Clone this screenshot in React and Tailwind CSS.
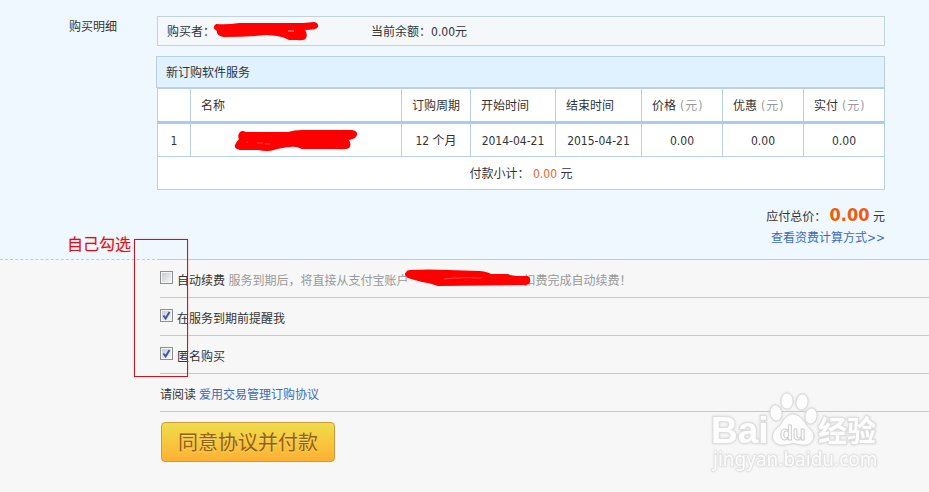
import { useState } from "react";
import clsx from "clsx";

const columns = [
  { title: "", width: "w-[33px]" },
  { title: "名称", width: "w-auto" },
  { title: "订购周期", width: "w-[69px]" },
  { title: "开始时间", width: "w-[85px]" },
  { title: "结束时间", width: "w-[86px]" },
  { title: "价格", unit: "元", width: "w-[81px]" },
  { title: "优惠", unit: "元", width: "w-[81px]" },
  { title: "实付", unit: "元", width: "w-[81px]" },
];

const BuyerMark = () => (
  <svg
    width="106"
    height="20"
    viewBox="0 0 106 20"
    className="-ml-0.5"
    aria-hidden="true"
  >
    <path
      d="M3 2 Q14 3 26 1 L90 1 L101 0 Q106 1 105 5 Q104 8 92 8 Q95 12 93 16 Q92 19 84 18 L76 18 Q71 15 64 14 L54 13 Q34 15 10 15 Q3 13 4 9 Q-2 6 3 2Z"
      fill="#fe0000"
    />
    <path d="M75 9 L81 9" stroke="#f7b0b0" strokeWidth="1" />
  </svg>
);

const NameMark = () => (
  <svg
    width="124"
    height="22"
    viewBox="0 0 124 22"
    className="mx-auto"
    aria-hidden="true"
  >
    <path
      d="M6 2 Q8 0 12 2 L54 2 Q60 0 68 0 L118 0 Q124 1 123 5 Q122 9 115 10 Q118 15 115 18 Q112 20 104 19 L68 19 Q62 16 56 17 Q46 18 40 20 Q34 22 24 20 L6 20 Q0 19 1 15 Q3 11 5 9 Q3 5 6 2Z"
      fill="#fe0000"
    />
    <path d="M12 12 h2 M23 13 h6 M31 14 h5" stroke="#f04a3a" strokeWidth="1" />
  </svg>
);

const AccountMark = () => (
  <svg
    width="127"
    height="17"
    viewBox="0 0 127 17"
    className="absolute -left-1 -top-1"
    aria-hidden="true"
  >
    <path
      d="M6 1 Q24 0 44 1 L76 2 Q84 3 87 5 L104 5 Q108 7 116 7 L124 7 Q127 9 126 13 Q125 16 121 16 L34 17 Q26 14 18 13 Q10 11 4 9 Q-1 6 2 3 Q3 1 6 1Z"
      fill="#fe0000"
    />
    <path
      d="M40 10 Q56 8 78 9"
      stroke="#f44444"
      strokeWidth="1"
      fill="none"
    />
  </svg>
);

const BaiduLogo = () => (
  <svg
    width="180"
    height="96"
    viewBox="0 0 180 96"
    className="pointer-events-none absolute bottom-5 right-[49px] drop-shadow-[0_0_1px_#d4d4d4]"
    role="img"
    aria-label="Baidu 经验"
  >
    <g fill="#fdfdfd" stroke="#dcdcdc" strokeWidth="1">
      <ellipse cx="76" cy="37" rx="6" ry="8" transform="rotate(-8 76 37)" />
      <ellipse cx="87" cy="25" rx="6" ry="8" />
      <ellipse cx="102" cy="26" rx="6" ry="8" transform="rotate(8 102 26)" />
      <ellipse cx="111" cy="40" rx="6" ry="8" transform="rotate(8 111 40)" />
      <path d="M93 38 Q99 38 103 44 Q106 49 110 53 Q116 58 113 64 Q110 70 102 69 Q93 66 85 69 Q76 70 73 64 Q71 57 77 52 Q81 49 84 43 Q88 38 93 38Z" />
    </g>
    <g
      fill="#fdfdfd"
      stroke="#dedede"
      strokeWidth="2"
      fontFamily="'Liberation Sans', 'Noto Sans CJK SC', sans-serif"
      fontWeight="700"
    >
      <text x="11" y="67" fontSize="37" paintOrder="stroke">
        Bai
      </text>
      <text x="118" y="66" fontSize="29" paintOrder="stroke">
        经验
      </text>
    </g>
    <text
      x="80"
      y="64"
      fontSize="21"
      fontWeight="700"
      fill="#fdfdfd"
      stroke="#cfcfcf"
      strokeWidth="1"
      fontFamily="'Liberation Sans', sans-serif"
    >
      du
    </text>
    <text
      x="13"
      y="90"
      fontSize="19"
      fill="#fdfdfd"
      stroke="#dedede"
      strokeWidth="1"
      paintOrder="stroke"
      fontFamily="'Noto Sans', sans-serif"
    >
      jingyan.baidu.com
    </text>
  </svg>
);

const Checkbox = ({ id, checked, onChange }) => (
  <span className="mb-0.5 grid size-[13px] shrink-0">
    <input
      id={id}
      type="checkbox"
      checked={checked}
      onChange={onChange}
      className="col-start-1 row-start-1 size-[13px] appearance-none border border-[#8e8f8f] bg-linear-to-br from-[#c4c8cd] to-[#fbfbfb] shadow-[inset_0_0_0_1px_#f4f4f4]"
    />
    {checked && (
      <svg
        viewBox="0 0 13 13"
        className="pointer-events-none col-start-1 row-start-1 size-[13px]"
        aria-hidden="true"
      >
        <path
          d="M3.5 6.5 L5.6 9.5 L9.5 3"
          fill="none"
          stroke="#42569b"
          strokeWidth="2"
        />
      </svg>
    )}
  </span>
);

const OptionRow = ({ children, className }) => (
  <li
    className={clsx(
      "flex h-[38px] items-center border-t border-[#c8c8c8]",
      className
    )}
  >
    {children}
  </li>
);

const App = () => {
  const [options, setOptions] = useState({
    renew: false,
    remind: true,
    anonymous: true,
  });

  const toggle = (key) => {
    setOptions((prev) => ({ ...prev, [key]: !prev[key] }));
  };

  return (
    <main className="relative flex min-h-screen flex-col bg-[#f7f7f7] font-['DejaVu_Sans_Condensed','Noto_Sans_CJK_SC',sans-serif] text-[12px] leading-5 text-[#333333]">
      {/* Order details */}
      <section className="flex bg-[#f0f8ff] pb-[11px] pr-11 pt-4">
        <h2 className="w-[156px] shrink-0 pl-[69px] pt-px">购买明细</h2>

        <div className="min-w-0 flex-1">
          <div className="ml-px flex h-[30px] items-center border border-[#c3d3de] bg-[#f4f8fb] pl-[9px] pt-0.5">
            <span>购买者：</span>
            <BuyerMark />
            <span className="ml-[52px]">当前余额：0.00元</span>
          </div>

          <h3 className="mt-[10px] flex h-8 items-center border border-[#b9d0e0] bg-[#e0f1ff] pl-[9px] pt-0.5">
            新订购软件服务
          </h3>

          <div className="pl-px">
            <table className="w-full table-fixed border-collapse border border-[#b9d0e0] bg-white">
              <thead>
                <tr className="h-[34px] border-b-3 border-[#aac9f3]">
                  {columns.map((col, index) => (
                    <th
                      key={index}
                      scope="col"
                      className={clsx(
                        "whitespace-nowrap border-x border-x-[#b9d0e0] pl-[10px] pt-0.5 text-left font-normal",
                        col.width
                      )}
                    >
                      {col.title}
                      {col.unit && (
                        <span className="ml-1 inline-flex gap-px text-[#999999]">
                          <span>(</span>
                          {col.unit}
                          <span>)</span>
                        </span>
                      )}
                    </th>
                  ))}
                </tr>
              </thead>
              <tbody>
                <tr className="h-[34px] text-center [&>td]:border-x [&>td]:border-[#b9d0e0] [&>td]:pt-0.5">
                  <td>1</td>
                  <td>
                    <NameMark />
                  </td>
                  <td>12 个月</td>
                  <td>2014-04-21</td>
                  <td>2015-04-21</td>
                  <td>0.00</td>
                  <td>0.00</td>
                  <td>0.00</td>
                </tr>
                <tr className="h-[33px] border-t border-[#b9d0e0] text-center">
                  <td colSpan={8} className="pt-0.5">
                    付款小计： <span className="text-[#e8641b]">0.00</span> 元
                  </td>
                </tr>
              </tbody>
            </table>
          </div>

          <div className="pt-[14px] text-right">
            <p className="leading-[22px]">
              应付总价：{" "}
              <strong className="text-[18px] text-[#f05a0a]">0.00</strong> 元
            </p>
            <a href="#fees" className="block text-[#3a6cb8]">
              查看资费计算方式&gt;&gt;
            </a>
          </div>
        </div>
      </section>

      {/* Payment options */}
      <section className="relative flex">
        <div className="w-40 shrink-0 border-t border-dashed border-[#c0cdd8]" />
        <div className="min-w-0 flex-1">
          <ul>
            <OptionRow>
              <Checkbox
                id="renew"
                checked={options.renew}
                onChange={() => toggle("renew")}
              />
              <label htmlFor="renew" className="ml-1 whitespace-nowrap pt-1">
                自动续费{" "}
                <span className="text-[#999999]">
                  服务到期后，将直接从支付宝账户
                  <span className="relative inline-block h-3 w-[115px]">
                    <AccountMark />
                  </span>
                  扣费完成自动续费！
                </span>
              </label>
            </OptionRow>
            <OptionRow>
              <Checkbox
                id="remind"
                checked={options.remind}
                onChange={() => toggle("remind")}
              />
              <label htmlFor="remind" className="ml-1 pt-1">
                在服务到期前提醒我
              </label>
            </OptionRow>
            <OptionRow>
              <Checkbox
                id="anonymous"
                checked={options.anonymous}
                onChange={() => toggle("anonymous")}
              />
              <label htmlFor="anonymous" className="ml-1 pt-1">
                匿名购买
              </label>
            </OptionRow>
            <OptionRow className="gap-[3px] pt-1">
              <span>请阅读</span>
              <a href="#agreement" className="text-[#3a6cb8]">
                爱用交易管理订购协议
              </a>
            </OptionRow>
          </ul>
          <div className="border-t border-[#c8c8c8] pl-px pt-[10px]">
            <button
              type="button"
              className="h-10 rounded-[4px] border border-[#cf9a3c] bg-linear-to-b from-[#eedd4b] to-[#feb033] px-4 pt-0.5 text-[20px] text-[#95600f] [text-shadow:0_1px_0_#f9dc7c]"
            >
              同意协议并付款
            </button>
          </div>
        </div>

        {/* Hint drawn over the checkboxes */}
        <div className="pointer-events-none absolute -top-5 left-[67px] flex items-start text-[#c41a1f]">
          <span className="w-[67px] -translate-y-1 text-[16px] leading-[20px] [text-shadow:0_0_2px_#ffb0b0]">
            自己勾选
          </span>
          <span className="h-[138px] w-[54px] border border-[#b81c22] shadow-[0_0_2px_#ffb0b0]" />
        </div>
      </section>

      <BaiduLogo />
    </main>
  );
};

export default App;
